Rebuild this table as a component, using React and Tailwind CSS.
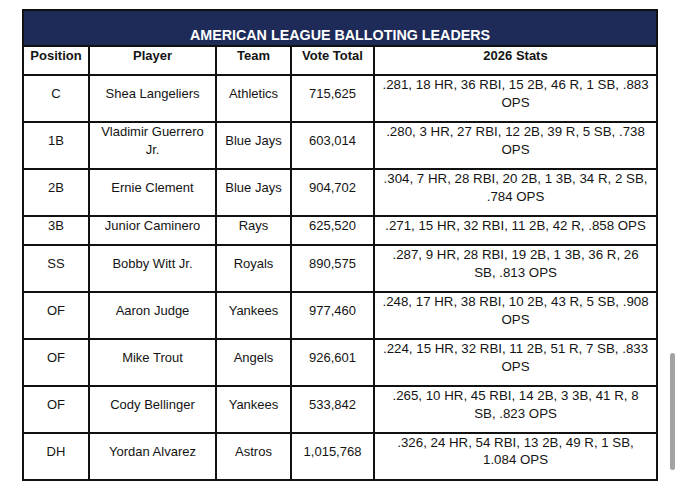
const rows = [
  { pos: 'C', player: ['Shea Langeliers'], team: 'Athletics', votes: '715,625', stats: ['.281, 18 HR, 36 RBI, 15 2B, 46 R, 1 SB, .883', 'OPS'] },
  { pos: '1B', player: ['Vladimir Guerrero', 'Jr.'], team: 'Blue Jays', votes: '603,014', stats: ['.280, 3 HR, 27 RBI, 12 2B, 39 R, 5 SB, .738', 'OPS'] },
  { pos: '2B', player: ['Ernie Clement'], team: 'Blue Jays', votes: '904,702', stats: ['.304, 7 HR, 28 RBI, 20 2B, 1 3B, 34 R, 2 SB,', '.784 OPS'] },
  { pos: '3B', player: ['Junior Caminero'], team: 'Rays', votes: '625,520', stats: ['.271, 15 HR, 32 RBI, 11 2B, 42 R, .858 OPS'] },
  { pos: 'SS', player: ['Bobby Witt Jr.'], team: 'Royals', votes: '890,575', stats: ['.287, 9 HR, 28 RBI, 19 2B, 1 3B, 36 R, 26', 'SB, .813 OPS'] },
  { pos: 'OF', player: ['Aaron Judge'], team: 'Yankees', votes: '977,460', stats: ['.248, 17 HR, 38 RBI, 10 2B, 43 R, 5 SB, .908', 'OPS'] },
  { pos: 'OF', player: ['Mike Trout'], team: 'Angels', votes: '926,601', stats: ['.224, 15 HR, 32 RBI, 11 2B, 51 R, 7 SB, .833', 'OPS'] },
  { pos: 'OF', player: ['Cody Bellinger'], team: 'Yankees', votes: '533,842', stats: ['.265, 10 HR, 45 RBI, 14 2B, 3 3B, 41 R, 8', 'SB, .823 OPS'] },
  { pos: 'DH', player: ['Yordan Alvarez'], team: 'Astros', votes: '1,015,768', stats: ['.326, 24 HR, 54 RBI, 13 2B, 49 R, 1 SB,', '1.084 OPS'] },
];

const cell = 'border-2 border-[#111] px-1 pt-0 pb-[9.5px] align-middle text-center whitespace-nowrap';

const Lines = ({ lines }) => lines.map((l, i) => <div key={i}>{l}</div>);

const App = () => {
  return (
    <div className="relative w-[680px] h-[495px] overflow-hidden bg-white text-[#141414] font-['Liberation_Sans',Arial,sans-serif]">
      <table className="table-fixed border-collapse w-[634px] ml-[22px] mt-[9px] text-[13px] leading-[17.7px]">
        <colgroup>
          <col className="w-[66px]" />
          <col className="w-[127px]" />
          <col className="w-[75px]" />
          <col className="w-[83px]" />
          <col className="w-[283px]" />
        </colgroup>
        <thead>
          <tr>
            <th colSpan={5} className="border-2 border-[#111] bg-[#1e2b58] text-white font-bold text-[14.3px] leading-[17px] pt-[16px] pb-[1px] text-center">
              AMERICAN LEAGUE BALLOTING LEADERS
            </th>
          </tr>
          <tr className="font-bold">
            <th className={cell}>Position</th>
            <th className={cell}>Player</th>
            <th className={cell}>Team</th>
            <th className={cell}>Vote Total</th>
            <th className={cell}>2026 Stats</th>
          </tr>
        </thead>
        <tbody>
          {rows.map((r, i) => (
            <tr key={i}>
              <td className={cell}>{r.pos}</td>
              <td className={cell}><Lines lines={r.player} /></td>
              <td className={cell}>{r.team}</td>
              <td className={cell}>{r.votes}</td>
              <td className={`${cell} text-[13.3px]`}><Lines lines={r.stats} /></td>
            </tr>
          ))}
        </tbody>
      </table>
      {/* overlay scrollbar */}
      <div className="absolute right-[5px] top-[353px] w-[5px] h-[117px] rounded-full bg-[#a3a3a3]" />
    </div>
  );
};

export default App;
